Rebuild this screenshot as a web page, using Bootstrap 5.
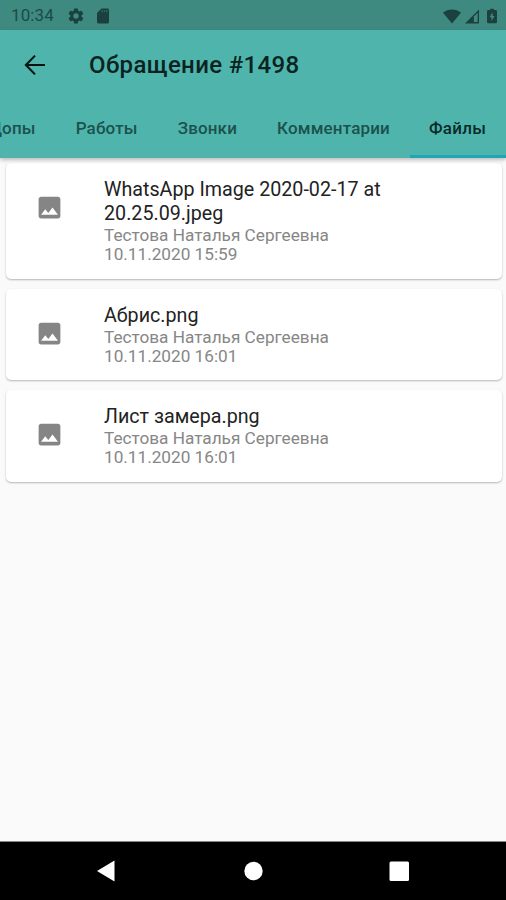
<!DOCTYPE html>
<html lang="ru">
<head>
<meta charset="utf-8">
<meta name="viewport" content="width=device-width, initial-scale=1">
<title>Обращение #1498</title>
<link href="https://cdn.jsdelivr.net/npm/bootstrap@5.3.0/dist/css/bootstrap.min.css" rel="stylesheet">
<style>
body{font-family:Roboto,"Noto Sans",sans-serif;background:#fafafa;color:#222}
.screen{height:900px}
.status-bar{height:30px;background:#3e8a81;color:#1b4a47;font-size:17px;padding:2px 9px 0 11px}
.clock{width:56px;letter-spacing:.1px}
.app-header{background:#4fb5ac;height:128px;box-shadow:0 2px 4px rgba(0,0,0,.25);z-index:1}
.title-row{height:70px;padding-left:20px}
.page-title{font-size:24px;font-weight:500;color:#0a2321;margin-left:39px;letter-spacing:.36px}
.tab-strip{height:58px}
.tab-item{padding:0 20px 1px;height:58px;font-size:17px;font-weight:500;color:#1c514e;white-space:nowrap;letter-spacing:.16px}
.tab-item.active{color:#0a2a29;width:96px;border-bottom:3px solid #1fa7b8;padding:2px 0 0 19px;letter-spacing:.3px}
.file-list{padding:5px 4px 0 6px;gap:10px}
.file-card{border:0;border-radius:5px;padding:15px 100px 14px 29px;box-shadow:0 1px 2px rgba(0,0,0,.28);background:#fff}
.file-icon{margin:15px 40px 0 0}
.file-name{font-size:19.7px;line-height:24px;color:#222}
.file-meta{font-size:17.2px;line-height:19.3px;color:#868686}
.nav-keys{height:59px;background:#000;border-top:1px solid #888}
</style>
<script src="https://cdn.jsdelivr.net/npm/bootstrap@5.3.0/dist/js/bootstrap.bundle.min.js"></script>
</head>
<body class="overflow-hidden">
<div class="screen d-flex flex-column">
  <div class="status-bar d-flex align-items-center flex-shrink-0">
    <span class="clock">10:34</span>
    <svg width="18" height="18" viewBox="0 0 24 24" fill="#1b403e"><path d="M19.4 13a7 7 0 0 0 0-2l2.1-1.6a.5.5 0 0 0 .1-.7l-2-3.4a.5.5 0 0 0-.6-.2l-2.5 1a7 7 0 0 0-1.7-1l-.4-2.7a.5.5 0 0 0-.5-.4h-4a.5.5 0 0 0-.5.4L9 5.100a7 7 0 0 0-1.700 1l-2.500-1a.5.5 0 0 0-.6.2l-2 3.400a.5.5 0 0 0 .1.7L4.500 11a7 7 0 0 0 0 2l-2.200 1.600a.5.5 0 0 0-.1.7l2 3.400c.1.2.4.3.6.2l2.500-1a7 7 0 0 0 1.700 1l.4 2.700c0 .2.2.4.5.4h4c.3 0 .5-.2.5-.4l.4-2.700a7 7 0 0 0 1.700-1l2.500 1c.2.1.5 0 .6-.2l2-3.400a.5.5 0 0 0-.1-.7zM12 15.600A3.600 3.600 0 1 1 12 8.400a3.600 3.600 0 0 1 0 7.200z"/></svg>
    <svg class="ms-2" width="20" height="18" viewBox="0 0 24 24" fill="#1b3f3d"><path d="M18 2h-8L4 8v12c0 1.100.9 2 2 2h12c1.100 0 2-.9 2-2V4c0-1.100-.9-2-2-2z"/><path fill="#2a625c" d="M10 4h2v3h-2zM13 4h2v3h-2zM16 4h2v3h-2z"/></svg>
    <svg class="ms-auto" width="18" height="15" viewBox="0 0 19 15" fill="#1b403e"><path d="M0 3.500C5.500-.9 13.500-.9 19 3.500L9.500 15z"/></svg>
    <svg class="ms-1" width="14" height="15" viewBox="0 0 15 15"><path d="M0 15L15 0V15z" fill="#1b403e"/><path d="M9.500 7.500L13.500 3.500V13.500H9.500z" fill="#3e8a81"/></svg>
    <svg class="ms-2" width="10" height="16" viewBox="0 0 11 16" fill="#1b403e"><path fill-rule="evenodd" d="M3.500 0h4v1.500H9.500Q11 1.500 11 3V14.500Q11 16 9.500 16H1.500Q0 16 0 14.500V3Q0 1.500 1.500 1.500H3.500zM6.200 4L2.800 9.500H5V13.500L8.300 8H6.200z"/></svg>
  </div>
  <header class="app-header position-relative flex-shrink-0">
    <div class="title-row d-flex align-items-center">
      <svg width="30" height="30" viewBox="0 0 24 24" fill="none" stroke="#061413" stroke-width="1.700"><path d="M20 12H5M12 4.500L4.700 12L12 19.500"/></svg>
      <h1 class="page-title mb-0">Обращение #1498</h1>
    </div>
    <nav class="tab-strip d-flex justify-content-end overflow-hidden">
      <span class="tab-item d-flex align-items-center">Допы</span>
      <span class="tab-item d-flex align-items-center">Работы</span>
      <span class="tab-item d-flex align-items-center">Звонки</span>
      <span class="tab-item d-flex align-items-center">Комментарии</span>
      <span class="tab-item active d-flex align-items-center flex-shrink-0">Файлы</span>
    </nav>
  </header>
  <main class="file-list d-flex flex-column flex-grow-1">
    <article class="file-card card flex-row align-items-start">
      <svg class="file-icon flex-shrink-0" width="29" height="29" viewBox="0 0 24 24" fill="#858585"><path d="M21 19V5c0-1.100-.9-2-2-2H5c-1.100 0-2 .9-2 2v14c0 1.100.9 2 2 2h14c1.100 0 2-.9 2-2zM8.500 13.500l2.500 3.010L14.500 12l4.500 6H5l3.500-4.500z"/></svg>
      <div>
        <div class="file-name">WhatsApp Image 2020-02-17 at 20.25.09.jpeg</div>
        <div class="file-meta">Тестова Наталья Сергеевна</div>
        <div class="file-meta">10.11.2020 15:59</div>
      </div>
    </article>
    <article class="file-card card flex-row align-items-start">
      <svg class="file-icon flex-shrink-0" width="29" height="29" viewBox="0 0 24 24" fill="#858585"><path d="M21 19V5c0-1.100-.9-2-2-2H5c-1.100 0-2 .9-2 2v14c0 1.100.9 2 2 2h14c1.100 0 2-.9 2-2zM8.500 13.500l2.500 3.010L14.500 12l4.500 6H5l3.500-4.500z"/></svg>
      <div>
        <div class="file-name">Абрис.png</div>
        <div class="file-meta">Тестова Наталья Сергеевна</div>
        <div class="file-meta">10.11.2020 16:01</div>
      </div>
    </article>
    <article class="file-card card flex-row align-items-start">
      <svg class="file-icon flex-shrink-0" width="29" height="29" viewBox="0 0 24 24" fill="#858585"><path d="M21 19V5c0-1.100-.9-2-2-2H5c-1.100 0-2 .9-2 2v14c0 1.100.9 2 2 2h14c1.100 0 2-.9 2-2zM8.500 13.500l2.500 3.010L14.500 12l4.500 6H5l3.500-4.500z"/></svg>
      <div>
        <div class="file-name">Лист замера.png</div>
        <div class="file-meta">Тестова Наталья Сергеевна</div>
        <div class="file-meta">10.11.2020 16:01</div>
      </div>
    </article>
  </main>
  <footer class="nav-keys flex-shrink-0">
    <svg class="d-block" width="506" height="58" viewBox="0 -1 506 58" fill="#fff"><path d="M97 28L114.500 17.500V38.500z"/><circle cx="253.500" cy="28" r="9.200"/><rect x="389.500" y="18.500" width="19.500" height="19.500" rx="1.500"/></svg>
  </footer>
</div>
</body>
</html>
